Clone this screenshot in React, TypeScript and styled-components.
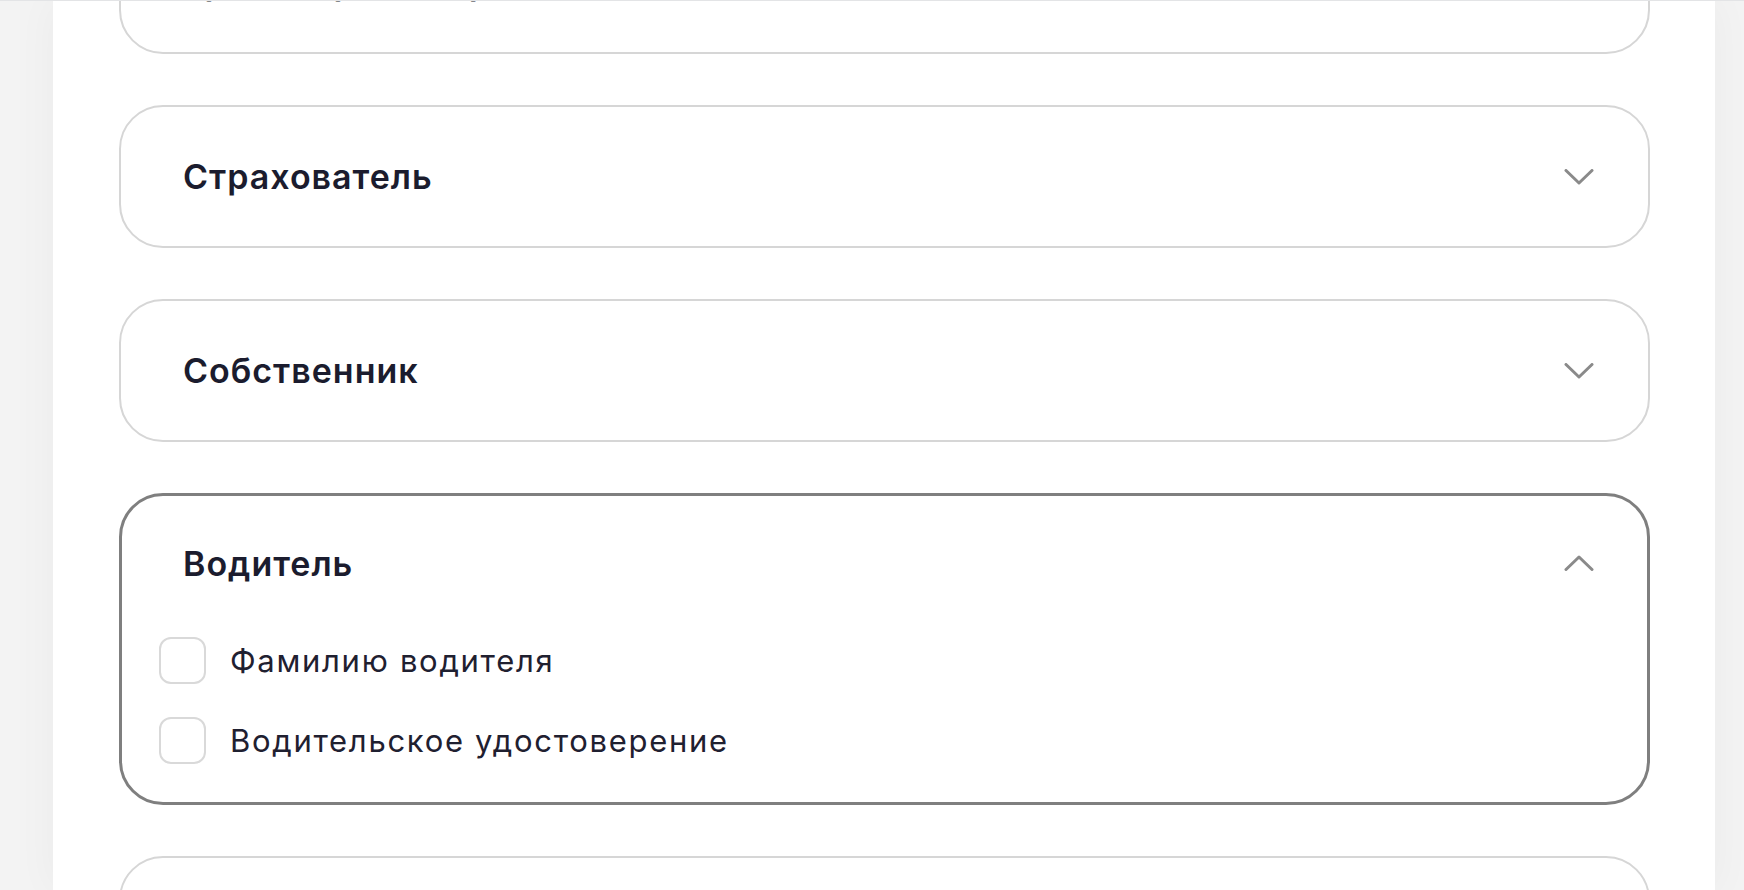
import styled, { createGlobalStyle } from "styled-components";

const GlobalStyle = createGlobalStyle`
  html, body {
    margin: 0;
    padding: 0;
    background-color: #f3f3f3;
    font-family: Inter, "Noto Sans", sans-serif;
  }
`;

const Page = styled.div`
  height: 100vh;
  box-sizing: border-box;
  display: flex;
  padding: 0 29px 0 53px;
  border-top: 1px solid #e3e4e6;
  overflow: hidden;
`;

const Panel = styled.main`
  flex: 1;
  background-color: #ffffff;
  box-shadow: 0 0 40px rgba(0, 0, 0, 0.04);
  padding: 0 65px 0 66px;
`;

const Stack = styled.div`
  display: flex;
  flex-direction: column;
  gap: 51px;
  margin-top: -90px;
`;

const Card = styled.section<{ $open?: boolean }>`
  background-color: #ffffff;
  border: ${(p) => (p.$open ? "3px solid #7f7f7f" : "2px solid #d6d6d6")};
  border-radius: 44px;
`;

const Header = styled.div<{ $open?: boolean }>`
  height: ${(p) => (p.$open ? "134px" : "139px")};
  display: flex;
  align-items: center;
  justify-content: space-between;
  padding: ${(p) => (p.$open ? "0 53px 0 61px" : "0 54px 0 62px")};
  cursor: pointer;
`;

const Title = styled.h3`
  margin: 0;
  font-size: 34px;
  font-weight: 600;
  color: #1b1c2e;
  letter-spacing: 1px;
`;

const Options = styled.ul`
  list-style: none;
  margin: 0;
  padding: 7px 0 38px 37px;
  display: flex;
  flex-direction: column;
  gap: 33px;
`;

const Option = styled.li`
  display: flex;
  align-items: center;
  gap: 24px;
`;

const Box = styled.span`
  width: 47px;
  height: 47px;
  box-sizing: border-box;
  border: 2px solid #d9d9d9;
  border-radius: 12px;
  flex-shrink: 0;
`;

const Label = styled.span`
  font-size: 31px;
  font-weight: 400;
  color: #1f2030;
  letter-spacing: 1.7px;
`;

const Chevron = ({ up }: { up?: boolean }) => (
  <svg width="30" height="16" viewBox="0 0 30 16" fill="none">
    <path
      d={up ? "M2 14.5 L15 2 L28 14.5" : "M2 1.5 L15 14 L28 1.5"}
      stroke="#8a8a8a"
      strokeWidth="3"
      strokeLinecap="round"
      strokeLinejoin="round"
    />
  </svg>
);

const sections = [
  { title: "Транспортное средство" },
  { title: "Страхователь" },
  { title: "Собственник" },
  {
    title: "Водитель",
    open: true,
    options: ["Фамилию водителя", "Водительское удостоверение"],
  },
  { title: "Документы" },
];

export default function App() {
  return (
    <>
      <GlobalStyle />
      <Page>
        <Panel>
          <Stack>
            {sections.map((s) => (
              <Card key={s.title} $open={s.open}>
                <Header $open={s.open}>
                  <Title>{s.title}</Title>
                  <Chevron up={s.open} />
                </Header>
                {s.open && s.options && (
                  <Options>
                    {s.options.map((o) => (
                      <Option key={o}>
                        <Box />
                        <Label>{o}</Label>
                      </Option>
                    ))}
                  </Options>
                )}
              </Card>
            ))}
          </Stack>
        </Panel>
      </Page>
    </>
  );
}
